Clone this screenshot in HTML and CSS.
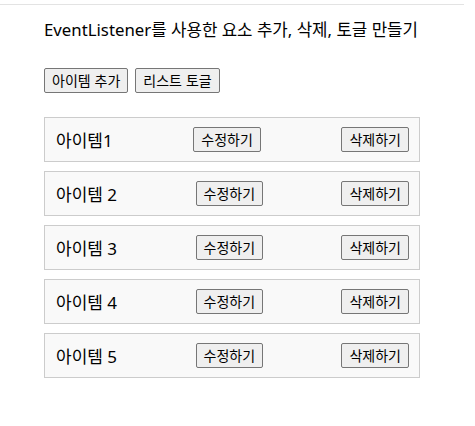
FILE: index.html
```html
<!DOCTYPE html>
<html lang="ko">

<head>
    <meta charset="UTF-8">
    <meta name="viewport" content="width=device-width, initial-scale=1.0">
    <title>EventListener</title>
    <link rel="stylesheet" href="styles.css">
</head>

<body>
    <div class="container">
        <h2 class="title">EventListener를 사용한 요소 추가, 삭제, 토글 만들기</h2>
        <div class="controls">
            <button id="addBtn">아이템 추가</button>
            <button id="toggleBtn">리스트 토글</button>
        </div>
        <ul id="itemList" class="item-list">
            <li class="item"><span>아이템1</span><button class="edit">수정하기</button><button class="delete">삭제하기</button></li>
            <li class="item"><span>아이템 2</span><button class="edit">수정하기</button><button class="delete">삭제하기</button></li>
            <li class="item"><span>아이템 3</span><button class="edit">수정하기</button><button class="delete">삭제하기</button></li>
            <li class="item"><span>아이템 4</span><button class="edit">수정하기</button><button class="delete">삭제하기</button></li>
            <li class="item"><span>아이템 5</span><button class="edit">수정하기</button><button class="delete">삭제하기</button></li>
        </ul>
    </div>
</body>

</html>
```

FILE: styles.css
```css
body {
    margin: 0;
    padding-top: 4px;
    font-family: "Noto Sans", "Noto Sans CJK KR", sans-serif;
    color: #000;
}

.container {
    border-top: 1px solid #e3e3e3;
    padding: 0 44px;
    width: 376px;
}

.title {
    margin: 12px 0 0;
    font-size: 16.8px;
    font-weight: normal;
    line-height: 26px;
}

.controls {
    margin-top: 25px;
    display: flex;
    gap: 7px;
}

button {
    font-family: "Noto Sans CJK KR", sans-serif;
    font-size: 14px;
    height: 25px;
    padding: 0 7px;
    line-height: 21px;
    background-color: #efefef;
    border: 1px solid #767676;
    border-radius: 2px;
    color: #000;
}

.item-list {
    list-style: none;
    margin: 24px 0 0;
    padding: 0;
}

.item {
    display: flex;
    justify-content: space-between;
    align-items: center;
    height: 43px;
    padding: 0 10px 0 11px;
    margin-bottom: 9px;
    background-color: #f9f9f9;
    border: 1px solid #cccccc;
    font-size: 17px;
}
```
